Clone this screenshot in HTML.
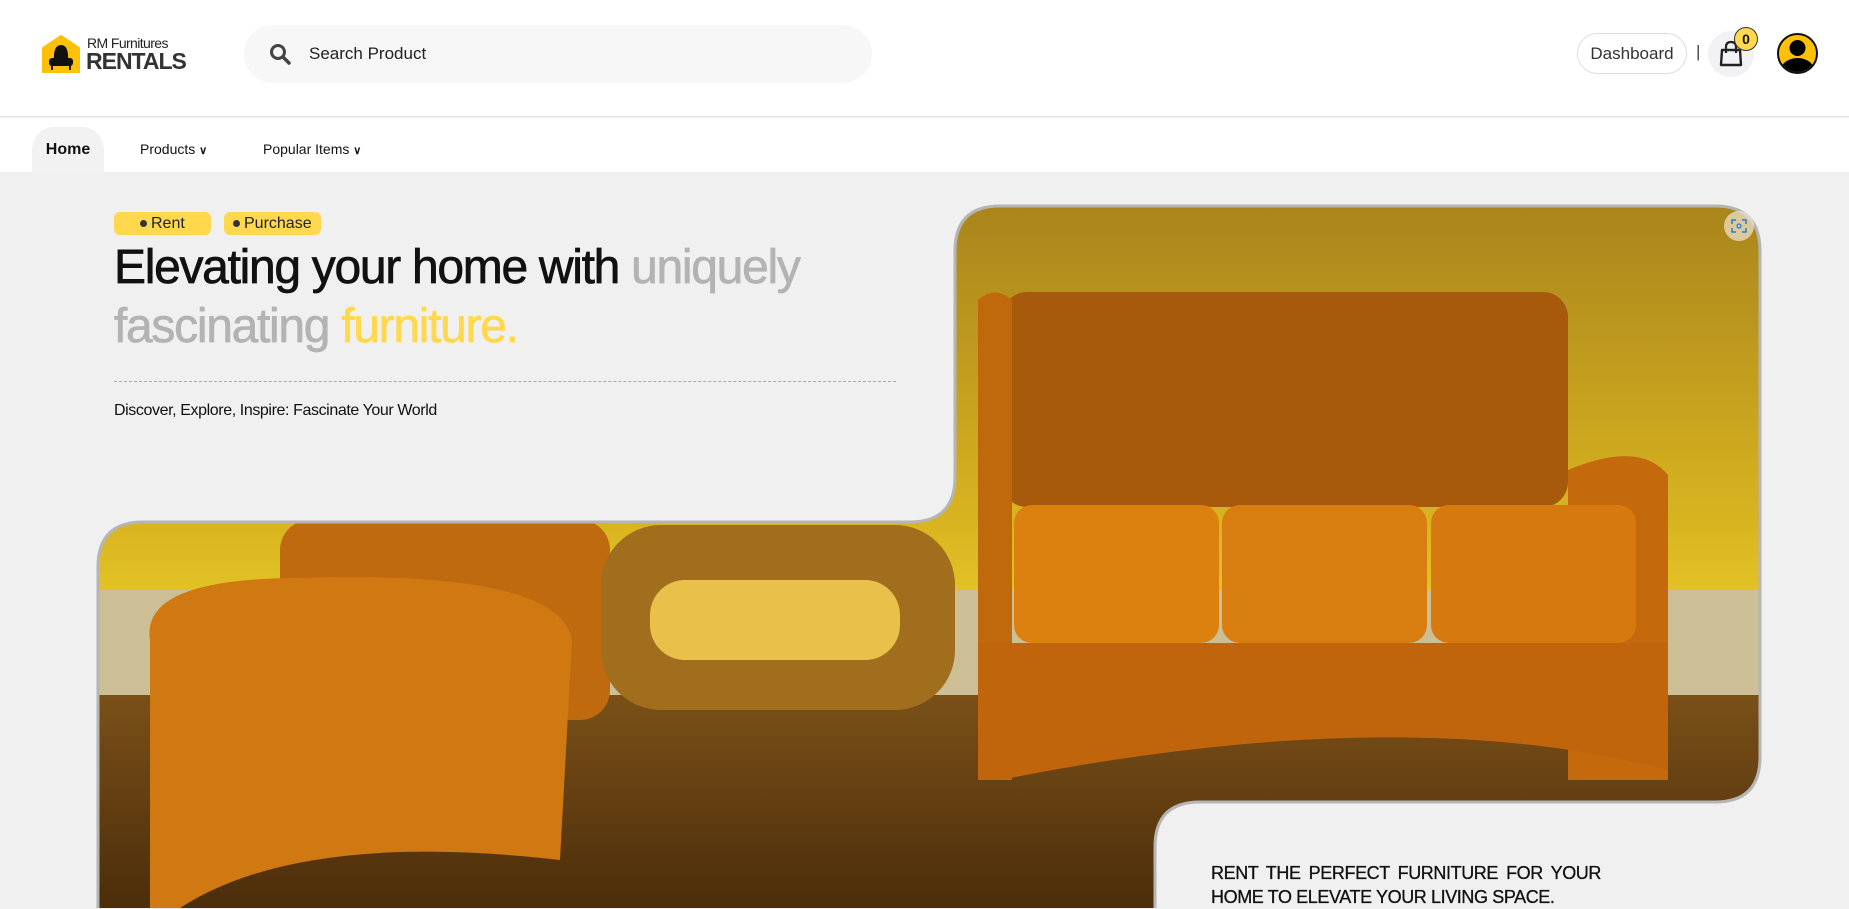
<!DOCTYPE html>
<html><head><meta charset="utf-8">
<style>
*{margin:0;padding:0;box-sizing:border-box}
body{width:1849px;height:908px;overflow:hidden;background:#f0f0f0;font-family:"Liberation Sans",sans-serif;position:relative;color:#111}
.hdr{position:absolute;left:0;top:0;width:1849px;height:117px;background:#fff;border-bottom:1px solid #e6e6e6}
.nav{position:absolute;left:0;top:118px;width:1849px;height:54px;background:#fff}
.search{position:absolute;left:244px;top:25px;width:628px;height:58px;border-radius:29px;background:#f7f7f7}
.search span{position:absolute;left:65px;top:19px;font-size:17px;color:#222}
.dash{position:absolute;left:1577px;top:33px;width:110px;height:41px;border:1px solid #ddd;border-radius:21px;font-size:17px;color:#333;text-align:center;line-height:39px;background:#fff}
.pill{position:absolute;top:212px;height:23px;background:#ffd84d;border-radius:6px;font-size:16px;line-height:23px;color:#222}
h1{position:absolute;left:114px;top:238px;font-size:48px;font-weight:normal;line-height:59px;letter-spacing:-1.3px;-webkit-text-stroke:0.7px currentColor;white-space:nowrap}
.g{color:#b3b3b3}.y{color:#ffd84d}
</style></head><body>
<div class="hdr">
 <svg style="position:absolute;left:41px;top:35px" width="40" height="38" viewBox="0 0 40 38">
  <path d="M20 1 L38 13 L38 38 L2 38 L2 13 Z" fill="#ffc107" stroke="#ffc107" stroke-linejoin="round" stroke-width="2"/>
  <path d="M13 26 Q12 10 20 10 Q28 10 27 26 Z" fill="#111"/>
  <rect x="8" y="23" width="24" height="8" rx="3" fill="#111"/>
  <rect x="10" y="31" width="2" height="4" fill="#111"/><rect x="28" y="31" width="2" height="4" fill="#111"/>
 </svg>
 <div style="position:absolute;left:87px;top:35px;font-size:14px;letter-spacing:-0.6px;color:#222">RM Furnitures</div>
 <div style="position:absolute;left:86px;top:48px;font-size:23px;font-weight:bold;letter-spacing:-1px;color:#333">RENTALS</div>
 <div class="search">
  <svg style="position:absolute;left:25px;top:18px" width="22" height="22" viewBox="0 0 22 22"><circle cx="9" cy="9" r="6.5" fill="none" stroke="#444" stroke-width="3"/><path d="M14 14 L20 20" stroke="#444" stroke-width="3.5" stroke-linecap="round"/></svg>
  <span>Search Product</span>
 </div>
 <div class="dash">Dashboard</div>
 <div style="position:absolute;left:1696px;top:42px;font-size:17px;color:#444">|</div>
 <div style="position:absolute;left:1708px;top:31px;width:46px;height:46px;border-radius:50%;background:#f2f2f4"></div>
 <svg style="position:absolute;left:1718px;top:40px" width="26" height="27" viewBox="0 0 26 27"><path d="M4 10 L22 10 L23 25 L3 25 Z" fill="none" stroke="#222" stroke-width="2.4" stroke-linejoin="round"/><path d="M8 13 V7 Q8 2 13 2 Q18 2 18 7 V13" fill="none" stroke="#222" stroke-width="2.2"/></svg>
 <div style="position:absolute;left:1734px;top:27px;width:24px;height:24px;border-radius:50%;background:#ffd84d;border:1px solid #333;font-size:14px;font-weight:bold;text-align:center;line-height:22px">0</div>
 <svg style="position:absolute;left:1777px;top:33px" width="41" height="41" viewBox="0 0 41 41"><circle cx="20.5" cy="20.5" r="19.5" fill="#ffc107" stroke="#111" stroke-width="2"/><clipPath id="cc"><circle cx="20.5" cy="20.5" r="18.5"/></clipPath><g clip-path="url(#cc)" fill="#000"><circle cx="20.5" cy="15" r="8"/><ellipse cx="20.5" cy="38" rx="17" ry="13"/></g></svg>
</div>
<div class="nav">
 <div style="position:absolute;left:32px;top:9px;width:72px;height:45px;border-radius:22px 22px 0 0;background:#f2f2f2;font-size:16px;font-weight:bold;text-align:center;line-height:46px">Home</div>
 <div style="position:absolute;left:140px;top:23px;font-size:14px">Products <b style="font-size:11px">&#8744;</b></div>
 <div style="position:absolute;left:263px;top:23px;font-size:14px">Popular Items <b style="font-size:11px">&#8744;</b></div>
</div>

<div class="pill" style="left:114px;width:97px;padding-left:25px"><span style="position:absolute;left:26px;top:8px;width:7px;height:7px;border-radius:50%;background:#333"></span><span style="padding-left:12px">Rent</span></div>
<div class="pill" style="left:224px;width:97px"><span style="position:absolute;left:9px;top:8px;width:7px;height:7px;border-radius:50%;background:#333"></span><span style="padding-left:20px">Purchase</span></div>
<h1>Elevating your home with <span class="g">uniquely</span><br><span class="g">fascinating</span> <span class="y">furniture.</span></h1>
<div style="position:absolute;left:114px;top:381px;width:782px;border-top:1px dashed #aaa"></div>
<div style="position:absolute;left:114px;top:402px;font-size:16px;letter-spacing:-0.4px;color:#111">Discover, Explore, Inspire: Fascinate Your World</div>

<svg style="position:absolute;left:0;top:0" width="1849" height="908" viewBox="0 0 1849 908">
 <defs>
  <clipPath id="sh"><path id="shp" d="M98 920 L98 567 Q98 522 143 522 L910 522 Q955 522 955 477 L955 251 Q955 206 1000 206 L1715 206 Q1760 206 1760 251 L1760 757 Q1760 802 1715 802 L1200 802 Q1155 802 1155 847 L1155 920 Z"/></clipPath>
  <linearGradient id="wall" x1="0" y1="0" x2="0" y2="1"><stop offset="0" stop-color="#a8841c"/><stop offset="0.45" stop-color="#d9b420"/><stop offset="0.75" stop-color="#f5e030"/><stop offset="1" stop-color="#e8c828"/></linearGradient>
  <linearGradient id="floor" x1="0" y1="0" x2="0" y2="1"><stop offset="0" stop-color="#7a5018"/><stop offset="1" stop-color="#4a2c0a"/></linearGradient>
 </defs>
 <g clip-path="url(#sh)">
  <rect x="90" y="200" width="1680" height="720" fill="url(#wall)"/>
  <rect x="90" y="590" width="1680" height="110" fill="#cdbf95"/>
  <rect x="90" y="695" width="1680" height="220" fill="url(#floor)"/>
  <rect x="280" y="520" width="330" height="200" rx="30" fill="#c06a10"/>
  <rect x="601" y="525" width="354" height="185" rx="60" fill="#a06e1c"/>
  <rect x="650" y="580" width="250" height="80" rx="35" fill="#e8c04a"/>
  <path d="M150 640 Q140 578 300 578 Q560 570 572 640 L560 860 Q300 830 180 908 L150 908 Z" fill="#d07812"/>
  <rect x="1002" y="292" width="566" height="215" rx="25" fill="#a85a0c"/>
  <path d="M978 300 Q995 285 1012 300 L1012 780 L978 780 Z" fill="#c0680c"/>
  <path d="M1568 470 Q1640 440 1668 475 L1668 780 L1568 780 Z" fill="#c56a0c"/>
  <rect x="1014" y="505" width="205" height="138" rx="18" fill="#dc800f"/>
  <rect x="1222" y="505" width="205" height="138" rx="18" fill="#d87d0f"/>
  <rect x="1431" y="505" width="205" height="138" rx="18" fill="#d67a0f"/>
  <path d="M978 643 L1668 643 L1668 770 Q1400 700 1000 780 L978 780 Z" fill="#c0650c"/>
 </g>
 <use href="#shp" fill="none" stroke="#b5b5b5" stroke-width="3"/>
 <circle cx="1739" cy="226" r="15" fill="rgba(240,230,210,0.7)"/>
 <path d="M1732 224v-4h4M1742 220h4v4M1746 228v4h-4M1736 232h-4v-4" fill="none" stroke="#2a7bd0" stroke-width="1.5"/>
 <circle cx="1739" cy="226" r="2" fill="none" stroke="#2a7bd0" stroke-width="1.2"/>
</svg>
<div style="position:absolute;left:1211px;top:861px;width:390px;font-size:18px;font-weight:normal;-webkit-text-stroke:0.3px #111;line-height:24px;text-align:justify;text-align-last:left;letter-spacing:-0.4px">RENT THE PERFECT FURNITURE FOR YOUR HOME TO ELEVATE YOUR LIVING SPACE.</div>
</body></html>
